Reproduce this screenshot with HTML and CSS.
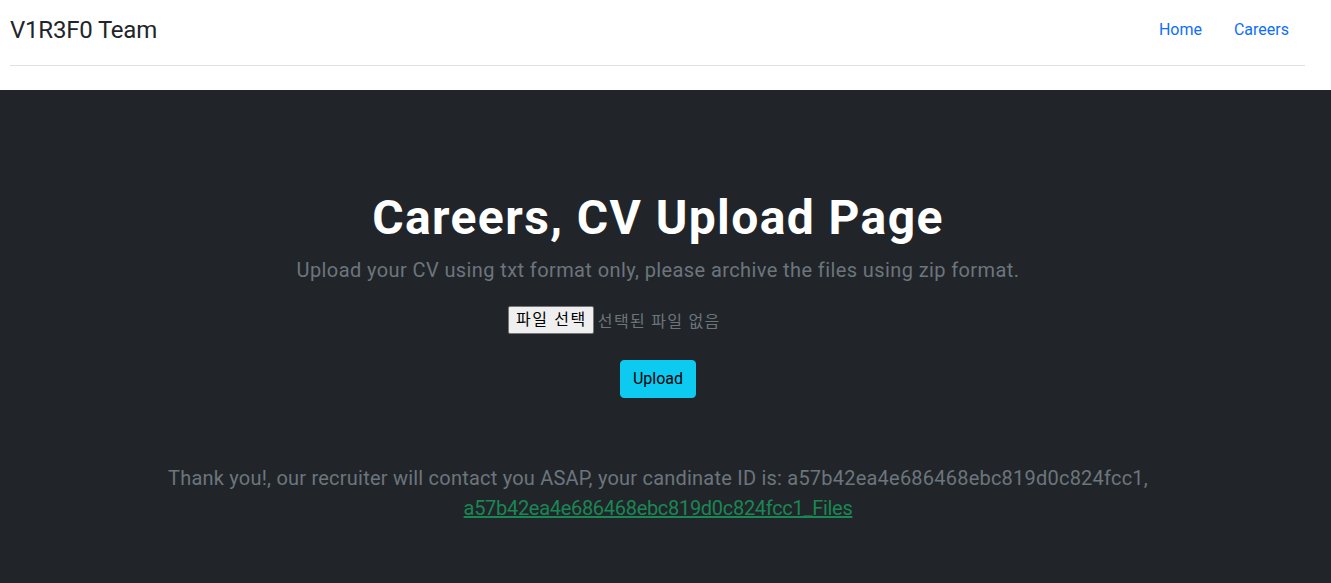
FILE: index.html
```html
<!DOCTYPE html>
<html lang="ko">
<head>
    <meta charset="UTF-8">
    <meta name="viewport" content="width=device-width, initial-scale=1.0">
    <title>Careers - V1R3F0 Team</title>
    <link rel="stylesheet" href="styles.css">
</head>
<body>
    <header class="site-header">
        <a class="brand" href="#">V1R3F0 Team</a>
        <nav class="nav">
            <a class="nav-link" href="#">Home</a>
            <a class="nav-link" href="#">Careers</a>
        </nav>
    </header>

    <section class="hero">
        <div class="hero-inner">
            <h1>Careers, CV Upload Page</h1>
            <p class="lead">Upload your CV using txt format only, please archive the files using zip format.</p>

            <form class="upload-form" onsubmit="return false;">
                <label class="file-field">
                    <span class="file-btn">파일 선택</span>
                    <span class="file-name">선택된 파일 없음</span>
                </label>
                <button type="submit" class="btn-upload">Upload</button>
            </form>

            <p class="thanks">Thank you!, our recruiter will contact you ASAP, your candinate ID is: a57b42ea4e686468ebc819d0c824fcc1, <a href="#">a57b42ea4e686468ebc819d0c824fcc1_Files</a></p>
        </div>
    </section>
</body>
</html>
```

FILE: styles.css
```css
body {
    margin: 0;
    font-family: Roboto, "Noto Sans CJK KR", sans-serif;
    font-size: 16px;
    color: #212529;
    background-color: #fff;
}
.site-header {
    display: flex;
    align-items: center;
    justify-content: space-between;
    margin: 0 26px 24px 10px;
    padding: 10px 0 15px;
    border-bottom: 1px solid #dee2e6;
}
.brand {
    font-size: 24px;
    line-height: 36px;
    letter-spacing: -0.2px;
    color: #212529;
    text-decoration: none;
}
.nav {
    display: flex;
}
.nav-link {
    padding: 8px 16px;
    line-height: 24px;
    color: #0d6efd;
    text-decoration: none;
}
.hero {
    background-color: #212529;
    min-height: calc(100vh - 90px);
    box-sizing: border-box;
    padding: 99px 25px 60px 10px;
    text-align: center;
}
.hero h1 {
    margin: 0 0 8px;
    font-size: 48px;
    line-height: 1.2;
    font-weight: 700;
    letter-spacing: 1.4px;
    color: #fff;
}
.lead {
    margin: 0 0 21px;
    font-size: 20px;
    line-height: 1.5;
    letter-spacing: 0.4px;
    color: #6c757d;
}
.upload-form {
    display: flex;
    flex-direction: column;
    align-items: center;
}
.file-field {
    display: flex;
    align-items: center;
    width: 300px;
    height: 28px;
    cursor: pointer;
}
.file-btn {
    box-sizing: border-box;
    height: 28px;
    padding: 0 6px 0 7px;
    line-height: 26px;
    letter-spacing: 1.6px;
    border: 1px solid #767676;
    border-radius: 2px;
    background-color: #efefef;
    color: #000;
}
.file-name {
    margin-left: 4px;
    letter-spacing: 1.3px;
    color: #6c757d;
}
.btn-upload {
    margin-top: 26px;
    padding: 6px 12px;
    font-family: inherit;
    font-size: 16px;
    line-height: 24px;
    color: #000;
    background-color: #0dcaf0;
    border: 1px solid #0dcaf0;
    border-radius: 4px;
    cursor: pointer;
}
.thanks {
    margin: 65px 0 0;
    font-size: 20px;
    line-height: 1.5;
    letter-spacing: 0.22px;
    color: #6c757d;
}
.thanks a {
    letter-spacing: -0.3px;
    color: #198754;
}
```
